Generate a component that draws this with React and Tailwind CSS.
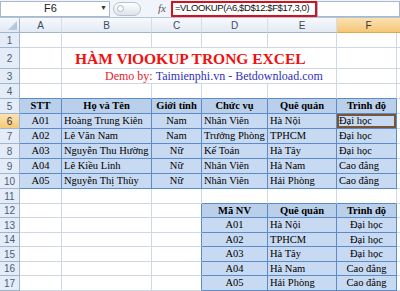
const W = ['w-[42px]', 'w-[90px]', 'w-[50px]', 'w-[66px]', 'w-[69px]', 'w-[60px]']

const grid = 'bg-white border-r border-b border-[#d0d7e5]'
const th = 'bg-[#b9cfea] border-r border-b border-[#5b8bc9] font-bold justify-center'
const td = 'bg-[#c8daf2] border-r border-b border-[#5b8bc9]'

const main = [
  ['A01', 'Hoàng Trung Kiên', 'Nam', 'Nhân Viên', 'Hà Nội', 'Đại học'],
  ['A02', 'Lê Văn Nam', 'Nam', 'Trưởng Phòng', 'TPHCM', 'Đại học'],
  ['A03', 'Nguyễn Thu Hường', 'Nữ', 'Kế Toán', 'Hà Tây', 'Đại học'],
  ['A04', 'Lê Kiều Linh', 'Nữ', 'Nhân Viên', 'Hà Nam', 'Cao đẳng'],
  ['A05', 'Nguyễn Thị Thùy', 'Nữ', 'Nhân Viên', 'Hải Phòng', 'Cao đẳng'],
]

const lookup = [
  ['A01', 'Hà Nội', 'Đại học'],
  ['A02', 'TPHCM', 'Đại học'],
  ['A03', 'Hà Tây', 'Đại học'],
  ['A04', 'Hà Nam', 'Cao đẳng'],
  ['A05', 'Hải Phòng', 'Cao đẳng'],
]

function Cell({ i, cls = grid, children }) {
  return <div className={`${W[i]} ${cls} flex items-center overflow-hidden whitespace-nowrap`}>{children}</div>
}

function Row({ n, h = 'h-[15px]', active, children }) {
  return (
    <div className={`flex ${h}`}>
      <div
        className={`w-[20px] flex items-center justify-center border-r border-b border-[#9eb6ce] font-['Liberation_Sans',sans-serif] text-[10px] ${
          active ? 'bg-gradient-to-b from-[#fbe3b4] to-[#f6c879] text-[#333]' : 'bg-[#e4ecf7] text-[#4c5d78]'
        }`}
      >
        {n}
      </div>
      {children}
      <div className="w-[3px] bg-white border-b border-[#d0d7e5]" />
    </div>
  )
}

function Blank({ n, h, bottomBlue = [] }) {
  return (
    <Row n={n} h={h}>
      {W.map((_, i) => (
        <Cell
          key={i}
          i={i}
          cls={`bg-white border-r border-r-[#d0d7e5] border-b ${bottomBlue.includes(i) ? 'border-b-[#5b8bc9]' : 'border-b-[#d0d7e5]'}`}
        />
      ))}
    </Row>
  )
}

export default function App() {
  const lowHeights = ['h-[15px]', 'h-[14px]', 'h-[15px]', 'h-[14px]', 'h-[15px]']

  return (
    <div className="w-[400px] h-[291px] overflow-hidden bg-white font-['Liberation_Serif',serif] text-[10.5px] text-black">
      {/* formula bar */}
      <div className="flex h-[18px] items-center bg-[#f1f5fb] border-b border-[#b4c4d8]">
        <div className="w-[110px] h-[16px] border border-[#a9b8cc] bg-white flex items-center">
          <span className="flex-1 text-center font-['Liberation_Sans',sans-serif] text-[11px] text-[#222]">F6</span>
          <span className="text-[7px] pr-[2px] text-[#333]">▼</span>
        </div>
        <div className="ml-[3px] w-[28px] h-[14px] rounded-full border border-[#b7c0cc] bg-gradient-to-b from-white to-[#dde3eb] flex items-center pl-[3px]">
          <span className="w-[7px] h-[7px] rounded-full border border-[#aab4c2] bg-white" />
        </div>
        <span className="ml-[17px] italic text-[11px] text-[#555] font-['Liberation_Serif',serif]">fx</span>
        <div className="ml-[5px] w-[146px] h-[16px] border-2 border-[#d2121c] bg-white flex items-center pl-[2px] font-['Liberation_Sans',sans-serif] text-[9.5px] tracking-[-0.4px] text-[#111] whitespace-nowrap overflow-hidden">
          =VLOOKUP(A6,$D$12:$F$17,3,0)
        </div>
        <div className="flex-1 h-[16px] border border-[#a9b8cc] bg-white" />
      </div>

      {/* column headers */}
      <div className="flex h-[15px] font-['Liberation_Sans',sans-serif] text-[10px] text-[#3b4a60]">
        <div className="w-[20px] relative bg-gradient-to-b from-[#f5f8fc] to-[#e1e9f4] border-r border-b border-[#9eb6ce]">
          <svg className="absolute right-[2px] bottom-[2px]" width="9" height="9" viewBox="0 0 9 9">
            <path d="M9 0 L9 9 L0 9 Z" fill="#b8c8dc" />
          </svg>
        </div>
        {['A', 'B', 'C', 'D', 'E'].map((c, i) => (
          <div
            key={c}
            className={`${W[i]} flex items-center justify-center bg-gradient-to-b from-[#f7f9fc] to-[#e3eaf4] border-r border-[#d5dde8] border-b border-b-[#9eb6ce]`}
          >
            {c}
          </div>
        ))}
        <div className="w-[63px] flex items-center justify-center bg-gradient-to-b from-[#fbe2b2] to-[#f5c677] border-b border-[#e2a94a] text-[#333]">
          F
        </div>
      </div>

      <Blank n={1} />

      {/* title row */}
      <Row n={2} h="h-[21px]">
        <Cell i={0} />
        <div className="w-[275px] bg-white border-r border-b border-[#d0d7e5] flex items-end pb-[2px] pl-[13px] whitespace-nowrap">
          <span className="font-bold text-[15.5px] text-[#f01010] leading-none">HÀM VlOOKUP TRONG EXCEL</span>
        </div>
        <Cell i={5} />
      </Row>

      <Row n={3}>
        <Cell i={0} />
        <div className="w-[275px] bg-white border-r border-b border-[#d0d7e5] flex items-center pl-[43px] whitespace-nowrap text-[12px]">
          <span className="text-[#e8202a]">Demo by:&nbsp;</span>
          <span className="text-[#3030c0]">Taimienphi.vn - Betdownload.com</span>
        </div>
        <Cell i={5} />
      </Row>

      <Blank n={4} bottomBlue={[0, 1, 2, 3, 4, 5]} />

      <Row n={5}>
        {['STT', 'Họ và Tên', 'Giới tính', 'Chức vụ', 'Quê quán', 'Trình độ'].map((t, i) => (
          <Cell key={t} i={i} cls={th}>
            {t}
          </Cell>
        ))}
      </Row>

      {main.map((r, ri) => (
        <Row key={r[0]} n={6 + ri} active={ri === 0}>
          {r.map((v, i) => {
            const center = i === 0 || i === 2
            const sel = ri === 0 && i === 5
            return (
              <Cell
                key={i}
                i={i}
                cls={`${td} ${center ? 'justify-center' : 'pl-[2px]'} ${sel ? 'shadow-[inset_0_0_0_2px_#7b5533]' : ''}`}
              >
                {v}
              </Cell>
            )
          })}
        </Row>
      ))}

      <Blank n={11} bottomBlue={[3, 4, 5]} />

      <Row n={12} h="h-[14px]">
        <Cell i={0} />
        <Cell i={1} />
        <Cell i={2} cls="bg-white border-b border-[#d0d7e5] border-r border-r-[#5b8bc9]" />
        {['Mã NV', 'Quê quán', 'Trình độ'].map((t, k) => (
          <Cell key={t} i={3 + k} cls={th}>
            {t}
          </Cell>
        ))}
      </Row>

      {lookup.map((r, ri) => (
        <Row key={r[0]} n={13 + ri} h={lowHeights[ri]}>
          <Cell i={0} />
          <Cell i={1} />
          <Cell i={2} cls="bg-white border-b border-[#d0d7e5] border-r border-r-[#5b8bc9]" />
          <Cell i={3} cls={`${td} justify-center`}>{r[0]}</Cell>
          <Cell i={4} cls={`${td} pl-[2px]`}>{r[1]}</Cell>
          <Cell i={5} cls={`${td} justify-center`}>{r[2]}</Cell>
        </Row>
      ))}
    </div>
  )
}
